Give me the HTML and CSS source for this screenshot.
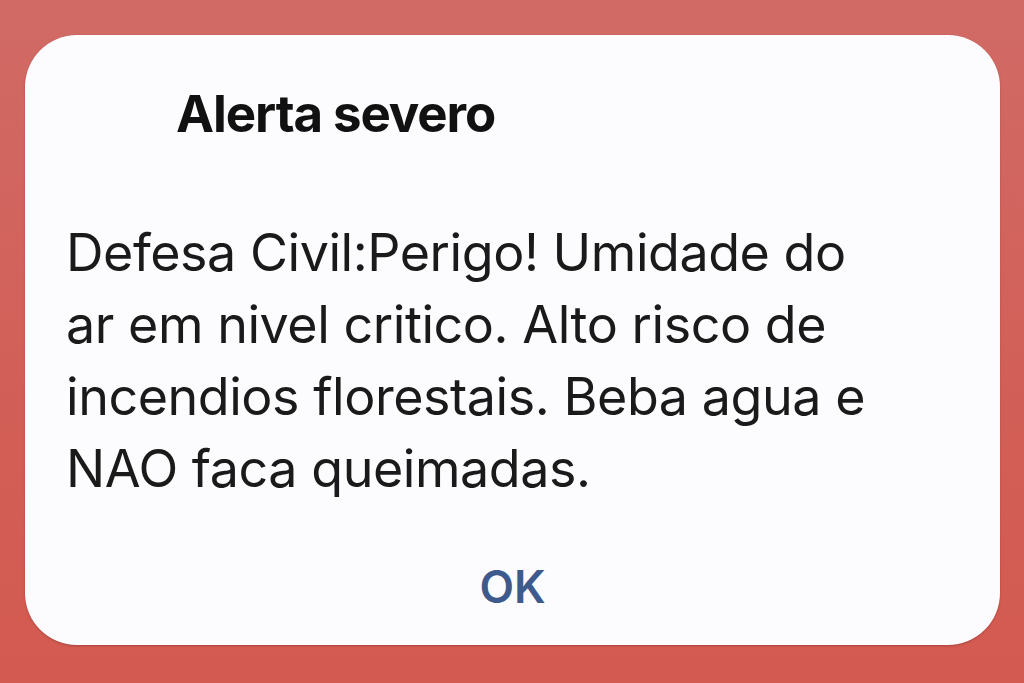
FILE: index.html
```html
<!DOCTYPE html>
<html lang="pt">
<head>
<meta charset="utf-8">
<link rel="stylesheet" href="styles.css">
</head>
<body>
<div class="dialog">
  <div class="title">Alerta severo</div>
  <div class="message">Defesa Civil:Perigo! Umidade do<br>ar em nivel critico. Alto risco de<br>incendios florestais. Beba agua e<br>NAO faca queimadas.</div>
  <div class="actions"><span class="ok">OK</span></div>
</div>
</body>
</html>
```
FILE: styles.css
```css
html, body {
  margin: 0;
  padding: 0;
}
body {
  width: 1024px;
  height: 683px;
  overflow: hidden;
  background: linear-gradient(180deg, #d16a65 0%, #d25f57 60%, #d35a50 100%);
  font-family: Inter, "Noto Sans", sans-serif;
  padding: 35px 0 0 25px;
  box-sizing: border-box;
}
.dialog {
  width: 975px;
  height: 610px;
  background: #fcfcfe;
  border-radius: 52px;
  box-sizing: border-box;
  padding: 49px 0 0 41px;
  display: flex;
  flex-direction: column;
  box-shadow: 0 1px 2px rgba(90, 30, 30, 0.35);
}
.title {
  font-size: 51px;
  line-height: 60px;
  font-weight: 700;
  color: #111;
  padding-left: 110px;
  letter-spacing: -1.1px;
}
.message {
  margin-top: 73px;
  font-size: 52px;
  line-height: 72px;
  color: #1a1a1a;
  font-weight: 400;
  letter-spacing: -0.45px;
}
.actions {
  margin-top: 52px;
  display: flex;
  justify-content: center;
  padding-right: 41px;
}
.ok {
  font-size: 45px;
  line-height: 60px;
  font-weight: 600;
  color: #3e5a8c;
}
```
